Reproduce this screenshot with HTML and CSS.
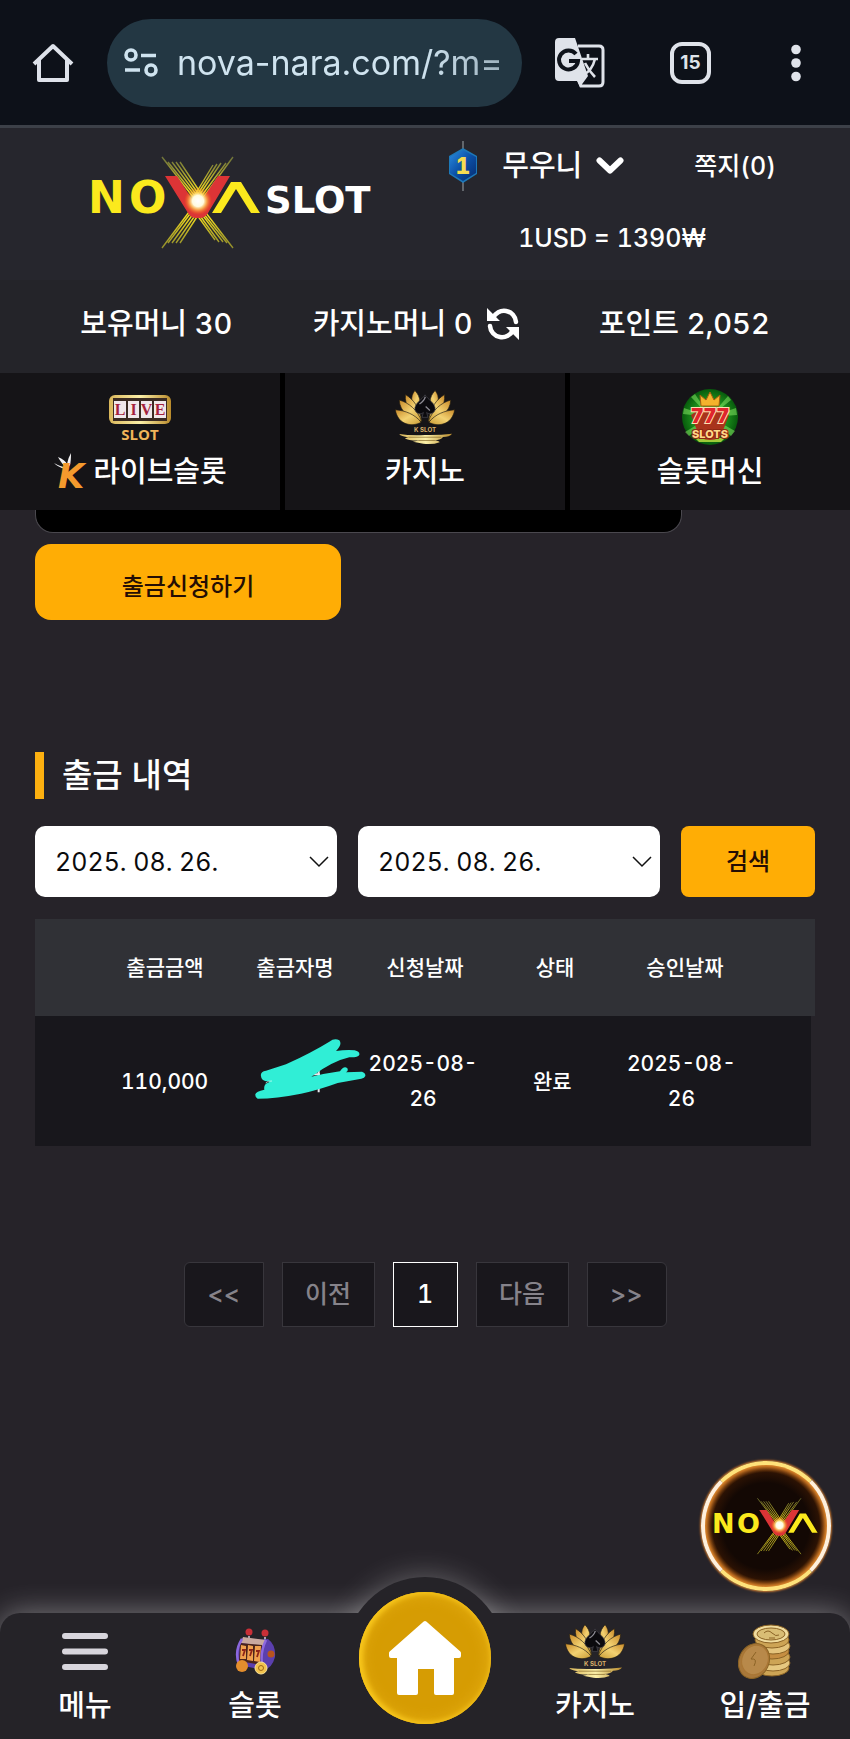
FILE: index.html
```html
<!DOCTYPE html>
<html lang="ko">
<head>
<meta charset="utf-8">
<meta name="viewport" content="width=device-width, initial-scale=1">
<title>NOVA SLOT</title>
<link rel="stylesheet" href="styles.css">
</head>
<body>
<svg class="defs" width="0" height="0" aria-hidden="true">
  <defs>
    <radialGradient id="flash">
      <stop offset="0" stop-color="#fff"/><stop offset=".4" stop-color="#fffbe0"/>
      <stop offset=".6" stop-color="#ffcf60" stop-opacity=".8"/><stop offset="1" stop-color="#f60" stop-opacity="0"/>
    </radialGradient>
    <linearGradient id="ray" x1="0" y1="157" x2="0" y2="250" gradientUnits="userSpaceOnUse">
      <stop offset="0" stop-color="#8d9440" stop-opacity=".7"/><stop offset=".4" stop-color="#ffe81c"/>
      <stop offset=".65" stop-color="#efd91f"/><stop offset="1" stop-color="#b7b32c" stop-opacity=".7"/>
    </linearGradient>
    <linearGradient id="gold" x1="0" y1="0" x2="1" y2="1">
      <stop offset="0" stop-color="#c98a28"/><stop offset=".5" stop-color="#f3d272"/><stop offset="1" stop-color="#c99b35"/>
    </linearGradient>
    <linearGradient id="goldbar" x1="0" y1="0" x2="1" y2="0">
      <stop offset="0" stop-color="#d9b65a"/><stop offset=".5" stop-color="#fbf0a8"/><stop offset="1" stop-color="#b98b2c"/>
    </linearGradient>
    <radialGradient id="green">
      <stop offset="0" stop-color="#7be04d"/><stop offset=".6" stop-color="#1c8f1c"/><stop offset="1" stop-color="#075a0c"/>
    </radialGradient>
    <linearGradient id="blue" x1="0" y1="0" x2="1" y2="1">
      <stop offset="0" stop-color="#2a8be0"/><stop offset=".5" stop-color="#0b4fa6"/><stop offset="1" stop-color="#062b6e"/>
    </linearGradient>
    <symbol id="nova-mark" viewBox="90 155 172 96">
      <g stroke="url(#ray)" stroke-width="1.4" fill="none">
        <path d="M162 157 L200 206M168 162 L203 206M172 162 L205 206M176 162 L207 206M180 162 L208 204"/>
        <path d="M233 157 L197 206M226 163 L194 206M221 163 L192 206M217 164 L190 206M213 165 L190 203"/>
        <path d="M198 200 L162 248M199 202 L168 243M201 203 L172 243M203 204 L176 243M204 206 L180 243"/>
        <path d="M196 200 L233 248M195 203 L227 243M194 204 L223 242M193 206 L219 242M192 208 L215 240"/>
      </g>
      <text class="mark-text" x="88" y="213">N</text>
      <text class="mark-text" x="129" y="213">O</text>
      <path d="M212 213 L231 182 H241 L260 213 H251 L236 189 L221 213Z" fill="#fbe91d"/>
      <path d="M165 176 H177 L197 207 L218 176 H230 L208 213 Q205 218 200 218 H196 Q191 218 188 213Z" fill="#dc3436"/>
      <circle cx="198" cy="201" r="14" fill="url(#flash)"/>
    </symbol>
    <symbol id="lotus" viewBox="700 188 190 172">
      <g id="petals" fill="url(#gold)" stroke="#211c12" stroke-width="2">
        <path d="M764 193 C783 212 784 240 774 258 C752 238 748 212 764 193Z"/>
        <path d="M735 205 C762 222 778 246 785 286 C752 266 732 240 735 205Z"/>
        <path d="M716 222 C745 230 772 252 785 288 C748 280 718 258 716 222Z"/>
        <path d="M704 252 C735 254 764 266 783 290 C758 305 712 300 704 252Z"/>
      </g>
      <use href="#petals" transform="translate(1590 0) scale(-1 1)"/>
      <path d="M795 206 C805 222 828 232 826 252 C822 264 808 268 800 260 L804 275 H786 L790 260 C782 268 768 264 764 252 C762 232 785 222 795 206Z" fill="#0b0a0e" stroke="#4b4951" stroke-width="2"/>
      <path d="M778 234 Q792 226 796 212 M797 242 L810 254" stroke="#8d8b93" stroke-width="4" fill="none"/>
      <text class="lotus-text" x="795" y="321">K SLOT</text>
      <path d="M716 326 Q750 331 795 329 Q840 330 878 325 Q870 335 850 335 Q846 344 822 345 Q838 347 840 351 Q820 359 790 356 L758 350 Q770 347 778 346 Q745 347 733 339 L744 336 Q722 334 716 326Z" fill="url(#goldbar)"/>
      <path d="M744 336 H845 M775 346 H825" stroke="#7b5f24" stroke-width="2"/>
    </symbol>
  </defs>
</svg>

<div class="browser-bar">
  <button class="icon-button" aria-label="홈">
    <svg width="42" height="42" viewBox="0 0 42 42" fill="none" stroke="#dee2ea" stroke-width="4" stroke-linejoin="round"><path d="M2 22 L21 4 L40 22 M7 18 V38 H35 V18"/></svg>
  </button>
  <label class="address">
    <svg width="34" height="30" viewBox="0 0 34 30" fill="none" stroke="#cfe3ef" stroke-width="3.6" aria-hidden="true"><circle cx="7" cy="7" r="5"/><path d="M17 7.500H32M1 22H16"/><circle cx="27" cy="22" r="5"/></svg>
    <input class="url" type="text" value="nova-nara.com/?m=5" aria-label="주소">
  </label>
  <div class="browser-actions">
    <button class="icon-button" aria-label="번역">
      <svg width="50" height="50" viewBox="0 0 50 50"><path d="M23 8 H44 Q48 8 48 12 V44 Q48 48 44 48 H26 L23 40" fill="none" stroke="#dfe3ea" stroke-width="3"/><path d="M4 0 H20 L33 38 L25 49 L22 43 H4 Q0 43 0 39 V4 Q0 0 4 0Z" fill="#dfe3ea"/><path d="M21 16 A9.500 9.500 0 1 0 23 23 H14" fill="none" stroke="#0e131b" stroke-width="4"/><path d="M27 21 H43 M33 16 V21 M40 21 Q37 33 28 37 M30 25 Q34 33 40 39" fill="none" stroke="#dfe3ea" stroke-width="2.600"/></svg>
    </button>
    <button class="tab-count" aria-label="탭 15개">15</button>
    <button class="icon-button more" aria-label="더보기">
      <svg width="40" height="40" viewBox="0 0 40 40" fill="#dfe3ea"><circle cx="20" cy="6.500" r="4.800"/><circle cx="20" cy="20" r="4.800"/><circle cx="20" cy="33.500" r="4.800"/></svg>
    </button>
  </div>
</div>

<header class="site-header">
  <div class="header-top">
    <a class="logo" href="#" aria-label="NOVA SLOT">
      <svg width="290" height="96" viewBox="90 155 290 96"><use href="#nova-mark" x="90" y="155" width="172" height="96"/><text class="logo-slot" x="265" y="213">SLOT</text></svg>
    </a>
    <div class="account">
      <div class="user-row">
        <svg width="30" height="50" viewBox="0 0 30 50" aria-hidden="true"><path d="M15 0V50" stroke="#777c82" stroke-width="1.500"/><path d="M15 7 L29 15 V33 L15 42 L1 33 V15Z" fill="#1d78b8"/><path d="M15 9 L28 16 V32 L15 40 L2 32 V16Z" fill="url(#blue)"/><text class="level" x="15" y="33">1</text></svg>
        <button class="user-name">무우니
          <svg width="28" height="20" viewBox="0 0 28 20" fill="none" stroke="#fff" stroke-width="6" stroke-linecap="round" stroke-linejoin="round"><path d="M3.500 4.500 L14 14.500 L24.500 4.500"/></svg>
        </button>
        <a class="messages" href="#">쪽지(0)</a>
      </div>
      <p class="rate">1USD = 1390₩</p>
    </div>
  </div>
  <div class="balances">
    <span>보유머니 30</span>
    <span class="casino-money">카지노머니 0
      <button class="icon-button" aria-label="새로고침">
        <svg width="32" height="32" viewBox="0 0 32 32"><path d="M6 10 A12 12 0 0 1 29 14 M26 22 A12 12 0 0 1 3 18" fill="none" stroke="#fff" stroke-width="4.500" stroke-linecap="round"/><path d="M0 0 V13 H13Z M32 32 V19 H19Z" fill="#fff"/></svg>
      </button>
    </span>
    <span>포인트 2,052</span>
  </div>
</header>

<nav class="game-nav">
  <a href="#">
    <svg width="64" height="58" viewBox="0 0 64 58" aria-hidden="true"><rect x="1" y="7" width="62" height="29" rx="6" fill="url(#goldbar)"/><rect x="5" y="10" width="54" height="23" fill="#3a2a22"/><g fill="#f0e7ea"><rect x="6" y="13" width="12" height="17"/><rect x="20" y="13" width="11" height="17"/><rect x="33" y="13" width="11" height="17"/><rect x="46" y="13" width="12" height="17"/></g><g class="reel"><text x="12" y="27">L</text><text x="25.500" y="27">I</text><text x="38.500" y="27">V</text><text x="52" y="27">E</text></g><text class="slot-caption" x="32" y="52">SLOT</text></svg>
    <span class="nav-label">
      <svg class="k-icon" width="36" height="38" viewBox="0 0 36 38" aria-hidden="true"><path d="M1 10 Q8 14 12 14 Q7 8 5 4 Q12 7 14 11 Q15 5 18 0 Q18 8 17 12 L12 16 Q5 14 1 10Z" fill="#f2f2f4"/><text class="k-mark" x="5" y="35">K</text></svg>
      라이브슬롯
    </span>
  </a>
  <a href="#">
    <svg width="62" height="58" aria-hidden="true"><use href="#lotus"/></svg>
    <span class="nav-label">카지노</span>
  </a>
  <a href="#">
    <svg width="58" height="58" viewBox="0 0 58 58" aria-hidden="true"><circle cx="29" cy="29" r="28" fill="url(#green)"/><path d="M29 29 L10 9 L14 6Z M29 29 L47 8 L50 12Z M29 29 L3 20 L2 26Z M29 29 L55 20 L56 27Z M29 29 L4 44 L8 48Z M29 29 L54 43 L50 48Z" fill="#8ef06a" opacity=".5"/><path d="M18 54 H40 L44 50 H14Z" fill="#9fc93a"/><path d="M10 27 Q20 19 29 20 Q38 19 48 27 L43 40 L38 50 Q29 54 20 50 L15 40Z" fill="#a8331c"/><path d="M20 18 L19 7 L25 12 L29 4 L33 12 L39 7 L38 18Z" fill="#f4b32c" stroke="#a55d10"/><text class="sevens" x="29" y="35">777</text><text class="slots-caption" x="29" y="50">SLOTS</text></svg>
    <span class="nav-label">슬롯머신</span>
  </a>
</nav>

<main class="content">
  <div class="form-end"></div>
  <button class="submit">출금신청하기</button>

  <h2 class="section-title">출금 내역</h2>
  <form class="search">
    <div class="date-select">
      <select aria-label="시작일"><option>2025. 08. 26.</option></select>
      <svg width="20" height="12" viewBox="0 0 20 12" fill="none" stroke="#111" stroke-width="1.500" aria-hidden="true"><path d="M1 1 L10 10 L19 1"/></svg>
    </div>
    <div class="date-select">
      <select aria-label="종료일"><option>2025. 08. 26.</option></select>
      <svg width="20" height="12" viewBox="0 0 20 12" fill="none" stroke="#111" stroke-width="1.500" aria-hidden="true"><path d="M1 1 L10 10 L19 1"/></svg>
    </div>
    <button class="search-button" type="button">검색</button>
  </form>

  <table class="history">
    <thead><tr><th>출금금액</th><th>출금자명</th><th>신청날짜</th><th>상태</th><th>승인날짜</th></tr></thead>
    <tbody><tr>
      <td>110,000</td>
      <td class="masked"><svg width="111" height="60" viewBox="767 416 333 180" aria-label="가려진 이름"><path d="M958 510 V576 M940 522 H962" stroke="#e8e8ec" stroke-width="6"/><path d="M785 528 Q782 514 800 511 L860 492 Q940 455 990 424 Q1006 412 1020 420 Q1030 432 1010 452 Q1040 448 1066 450 Q1082 454 1080 463 Q1076 472 1050 471 Q1000 482 936 529 Q980 519 1022 513 Q1034 495 1044 504 Q1048 512 1040 516 L1088 514 Q1099 518 1098 527 Q1096 534 1086 535 L1015 548 Q955 570 905 580 Q830 595 775 595 Q767 592 768 582 Q770 573 795 568 Q792 552 806 547 Q818 541 800 543 Q786 540 785 528Z" fill="#30eed6"/><path d="M799 548 Q806 541 818 542" stroke="#dffff9" stroke-width="2" fill="none"/></svg></td>
      <td>2025-08-26</td>
      <td>완료</td>
      <td>2025-08-26</td>
    </tr></tbody>
  </table>

  <nav class="pagination" aria-label="페이지">
    <a class="page edge first" href="#">&lt;&lt;</a>
    <a class="page step" href="#">이전</a>
    <a class="page current" href="#" aria-current="page">1</a>
    <a class="page step" href="#">다음</a>
    <a class="page edge last" href="#">&gt;&gt;</a>
  </nav>
</main>

<a class="floating-badge" href="#" aria-label="NOVA"><svg width="106" height="59" aria-hidden="true"><use href="#nova-mark"/></svg></a>

<nav class="tab-bar">
  <a href="#">
    <svg width="46" height="56" viewBox="0 0 46 56" stroke="#d8d5dc" stroke-width="6" stroke-linecap="round" aria-hidden="true"><path d="M3 13H43M3 28.500H43M3 44H43"/></svg>
    <span>메뉴</span>
  </a>
  <a href="#">
    <svg width="42" height="56" viewBox="0 0 42 56" aria-hidden="true"><path d="M15 13V20M31 14V20" stroke="#a9a3b0" stroke-width="2"/><circle cx="15" cy="9" r="3.500" fill="#c92f37"/><circle cx="31" cy="10" r="3.500" fill="#c92f37"/><path d="M8 15 Q22 18 34 16 Q42 22 41 34 Q38 46 29 47 L5 42 Q-1 29 8 15Z" fill="#5b3fae"/><path d="M9 14 L32 17 L30 23 L7 20Z" fill="#c9a9a0"/><path d="M6 20 L28 22 L27 42 L5 38Z" fill="#4b241b"/><g fill="#f0a04e"><path d="M7 22 L12 23 V36 L6 36Z"/><path d="M14 22 L19 23 V38 L13 37Z"/><path d="M21 23 L27 23 L26 39 L20 38Z"/></g><path d="M8 27 H11 L9 33 M15 27 H18 L16 33 M22 28 H25 L23 34" stroke="#8e2418" stroke-width="1.800" fill="none"/><path d="M8 16 Q0 28 5 42 M32 17 Q25 31 29 47" stroke="#8c68df" stroke-width="2.500" fill="none"/><circle cx="37" cy="31" r="3.500" fill="#b8541e"/><circle cx="8" cy="43" r="6" fill="#e38d2d"/><circle cx="27" cy="45" r="6" fill="#f3c34d" stroke="#fbe39a"/><circle cx="27" cy="45" r="2.500" fill="none" stroke="#9e6718"/></svg>
    <span>슬롯</span>
  </a>
  <a class="home" href="#" aria-label="홈">
    <span class="home-disc"><svg width="76" height="76" viewBox="0 0 76 76" aria-hidden="true"><path d="M38 3 L72 33 V36 H65 V73 H49 V47 H29 V73 H12 V36 H4 V33Z" fill="#fff" stroke="#fff" stroke-width="4" stroke-linejoin="round"/></svg></span>
  </a>
  <a href="#">
    <svg width="62" height="56" aria-hidden="true"><use href="#lotus"/></svg>
    <span>카지노</span>
  </a>
  <a href="#">
    <svg width="54" height="56" viewBox="0 0 54 56" aria-hidden="true"><g stroke="#8b6325" stroke-width="1"><g fill="#cda455"><ellipse cx="34" cy="45" rx="17" ry="8"/><ellipse cx="35" cy="40" rx="17" ry="8" fill="#e6c880"/><ellipse cx="35" cy="34" rx="17" ry="8"/><ellipse cx="34" cy="28" rx="17" ry="8" fill="#c58e42"/><ellipse cx="35" cy="23" rx="17" ry="8" fill="#e4c47c"/><ellipse cx="34" cy="17" rx="17" ry="8"/></g><ellipse cx="33" cy="11" rx="18" ry="9" fill="#f0dc9e"/><ellipse cx="33" cy="11" rx="14" ry="6" fill="#d9bd74"/><path d="M26 10 Q30 6 34 10 T41 12 M31 15 H37" fill="none"/><ellipse cx="16" cy="38" rx="15" ry="18" transform="rotate(25 16 38)" fill="#a9783a"/><ellipse cx="17" cy="37" rx="13" ry="15" transform="rotate(25 17 37)" fill="#b8894a" stroke="#a97634"/><path d="M18 29 L13 36 Q20 35 16 43" fill="none"/></g></svg>
    <span>입/출금</span>
  </a>
</nav>
</body>
</html>
```
FILE: styles.css
```css
* { box-sizing: border-box; }

body {
  position: relative;
  display: flex;
  flex-direction: column;
  min-height: 100vh;
  margin: 0;
  background: #262329;
  color: #fff;
  font-family: Inter, "Noto Sans CJK KR", sans-serif;
  font-size: 29px;
  font-weight: 500;
  font-variant-numeric: tabular-nums;
  line-height: 40px;
}

a { color: inherit; text-decoration: none; }
button, input, select { font: inherit; color: inherit; }
button { padding: 0; border: 0; background: none; cursor: pointer; }
svg { display: block; flex: none; }
.defs { position: absolute; }

/* Browser bar */
.browser-bar {
  display: flex;
  align-items: center;
  gap: 33px;
  height: 128px;
  padding: 0 34px 0 32px;
  border-bottom: 3px solid #3c4048;
  background: #0d1119;
}
.address {
  display: flex;
  flex: 1;
  align-items: center;
  gap: 19px;
  min-width: 0;
  height: 88px;
  padding: 0 17px;
  border-radius: 44px;
  background: #233743;
}
.url {
  flex: 1;
  min-width: 0;
  padding: 0;
  border: 0;
  outline: 0;
  background: none;
  color: #cfe3ef;
  font-size: 34px;
  font-variant-numeric: normal;
  font-weight: 400;
  mask-image: linear-gradient(to right, #000 75%, rgba(0, 0, 0, .7));
}
.browser-actions {
  display: flex;
  align-items: center;
  gap: 65px;
}
.tab-count {
  width: 41px;
  height: 42px;
  border: 4px solid #dfe3ea;
  border-radius: 12px;
  color: #dfe3ea;
  font-size: 19px;
  font-variant-numeric: normal;
  font-weight: 700;
  line-height: 32px;
}

/* Header */
.site-header { background: #26262d; }
.header-top {
  display: flex;
  justify-content: space-between;
  height: 152px;
  padding: 13px 74px 0 90px;
}
.logo { padding-top: 14px; }
.mark-text, .logo-slot { font-family: "DejaVu Sans", sans-serif; font-weight: 700; }
.mark-text { fill: #fbe91d; font-size: 44px; }
.logo-slot { fill: #fff; font-size: 37px; }
.account { text-align: center; }
.user-row { display: flex; align-items: center; height: 50px; }
.user-name {
  display: flex;
  align-items: center;
  gap: 14px;
  margin: 0 70px 0 24px;
}
.level { fill: #f6dc52; font-size: 23px; font-weight: 800; text-anchor: middle; }
.messages, .rate { font-size: 25px; }
.rate { margin: 27px 0 0; }
.balances {
  display: flex;
  align-items: center;
  justify-content: space-evenly;
  height: 93px;
  padding-bottom: 6px;
  background: #242429;
}
.casino-money { display: flex; align-items: center; gap: 14px; }

/* Game categories */
.game-nav {
  display: grid;
  grid-template-columns: repeat(3, 1fr);
  gap: 5px;
  height: 137px;
  background: #000;
}
.game-nav a {
  display: flex;
  flex-direction: column;
  align-items: center;
  gap: 6px;
  padding-top: 15px;
  background: #151417;
}
.nav-label { display: flex; align-items: center; gap: 4px; }
.k-icon { overflow: visible; }
.reel { fill: #a51f3c; font: 700 16px "Liberation Serif", serif; text-anchor: middle; }
.slot-caption { fill: #f0b45a; font: 700 15px "Open Sans", sans-serif; text-anchor: middle; }
.k-mark { fill: #f39a2d; font: italic 700 34px "DejaVu Sans", sans-serif; }
.lotus-text { fill: #d8b06a; font-size: 19px; font-weight: 700; text-anchor: middle; }
.sevens { fill: #e0242c; stroke: #ffe2b0; stroke-width: 2px; paint-order: stroke; font-size: 20px; font-weight: 900; text-anchor: middle; }
.slots-caption { fill: #ffd98a; stroke: #8d2712; stroke-width: 2px; paint-order: stroke; font-size: 11px; font-weight: 800; text-anchor: middle; }

/* Content */
.content { flex: 1; padding: 0 35px; }
.form-end {
  width: 83%;
  height: 23px;
  border: 1px solid #4a484e;
  border-top: 0;
  border-radius: 0 0 18px 18px;
  background: #000;
}
.submit {
  display: block;
  width: 306px;
  height: 76px;
  margin-top: 11px;
  padding-top: 10px;
  border-radius: 16px;
  background: #ffad05;
  color: #240d04;
  font-size: 24px;
}
.section-title {
  margin: 132px 0 27px;
  padding-left: 18px;
  border-left: 9px solid #fdb010;
  font-size: 33px;
  font-weight: 500;
  line-height: 47px;
}
.search {
  display: grid;
  grid-template-columns: 1fr 1fr 134px;
  gap: 21px;
  height: 71px;
}
.date-select { position: relative; }
.date-select select {
  width: 100%;
  height: 100%;
  padding: 0 20px;
  border: 0;
  border-radius: 10px;
  background: #fff;
  color: #0b0b0d;
  font-size: 25px;
  font-weight: 400;
  appearance: none;
}
.date-select svg {
  position: absolute;
  top: 30px;
  right: 8px;
  pointer-events: none;
}
.search-button {
  border-radius: 8px;
  background: #ffad05;
  color: #240d04;
  font-size: 24px;
}

.history { display: block; margin-top: 22px; text-align: center; }
.history thead, .history tbody { display: block; }
.history tr {
  display: grid;
  grid-template-columns: repeat(5, 1fr);
  padding: 0 8.333%;
}
.history thead tr { background: #303136; }
.history tbody tr { margin-right: 4px; background: #18171c; }
.history th, .history td {
  display: flex;
  align-items: center;
  justify-content: center;
  padding: 0 8px;
}
.history th { height: 97px; font-size: 21px; font-weight: 500; }
.history td { height: 130px; font-size: 21px; line-height: 35px; }
.history .masked { position: relative; }
.masked svg { position: absolute; top: 23px; left: 26px; }

.pagination {
  display: flex;
  justify-content: center;
  gap: 18px;
  margin-top: 116px;
}
.page {
  width: 80px;
  height: 65px;
  border: 1px solid #38363c;
  background: #19171c;
  color: #86838a;
  font-size: 25px;
  line-height: 63px;
  text-align: center;
}
.step { width: 93px; }
.current { width: 65px; border-color: #fff; color: #fff; }
.first { border-radius: 6px 0 0 6px; }
.last { border-radius: 0 6px 6px 0; }

/* Floating badge */
.floating-badge {
  position: absolute;
  right: 19px;
  bottom: 148px;
  display: flex;
  align-items: center;
  justify-content: center;
  width: 130px;
  height: 130px;
  border: 4px solid;
  border-color: #ffe27a #fff0dc;
  border-radius: 50%;
  background: radial-gradient(circle, #130804 50%, #2b1204 62%, #c76a18 72%);
  box-shadow: 0 0 2px 1px #c9752a, inset 0 0 5px 1px #f29a36;
}

/* Bottom bar */
.tab-bar {
  position: relative;
  display: grid;
  grid-template-columns: repeat(5, 1fr);
  height: 126px;
  border-radius: 20px 20px 0 0;
  background: #252328;
  box-shadow: 0 0 30px rgba(255, 255, 255, .4);
}
.tab-bar a {
  display: flex;
  flex-direction: column;
  align-items: center;
  gap: 7px;
  padding-top: 10px;
}
.tab-bar .home {
  position: relative;
  z-index: 1;
  padding: 0;
}
.home::before {
  content: "";
  position: absolute;
  top: -36px;
  width: 160px;
  height: 160px;
  border-radius: 50%;
  background: #252328;
  box-shadow: 0 0 30px rgba(255, 255, 255, .3);
  clip-path: inset(-40px -40px 124px);
}
.home-disc {
  position: absolute;
  top: -21px;
  display: flex;
  align-items: center;
  justify-content: center;
  width: 132px;
  height: 132px;
  border-radius: 50%;
  background: #d69c03;
  box-shadow: inset 2px 0 5px 2px #f8c71c, inset 0 0 14px 4px #e2ab10;
}
```
